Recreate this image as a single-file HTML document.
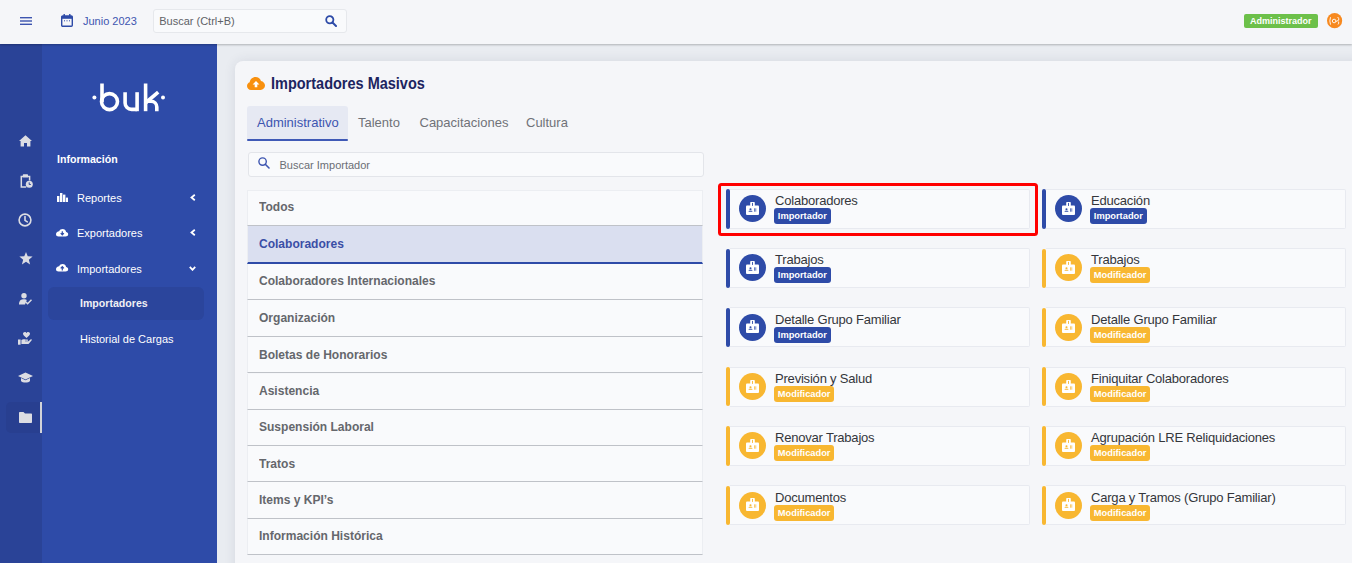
<!DOCTYPE html>
<html><head><meta charset="utf-8">
<style>
*{margin:0;padding:0;box-sizing:border-box}
html,body{width:1352px;height:563px;overflow:hidden;background:#e9ecf1;font-family:"Liberation Sans",sans-serif}
.a{position:absolute}
#hdr{left:0;top:0;width:1352px;height:44px;background:#f5f6f9;box-shadow:0 1px 2px rgba(0,0,0,.25);z-index:5}
#rail{left:0;top:44px;width:42px;height:519px;background:#2a4397}
#side{left:42px;top:44px;width:175px;height:519px;background:#2e4ba8}
#mainshade{left:217px;top:44px;width:1135px;height:519px;background:#e9ecf1}
#card{left:235px;top:61px;width:1130px;height:520px;background:#f5f6f9;border-radius:8px;box-shadow:0 0 12px rgba(40,50,80,.10)}
.txt{white-space:nowrap;line-height:1}
.navt{color:#fff;font-size:11px}
.li{position:absolute;left:247px;width:456px;background:#f9fafc;border-bottom:1px solid #bfc2c8;border-left:1px solid #eceef2;border-right:1px solid #eceef2}
.li span{margin-left:-0.5px}
.li span{position:absolute;left:11.4px;font-weight:700;font-size:13.2px;color:#65676c;white-space:nowrap;line-height:1;transform:scaleX(0.912);transform-origin:0 0}
.it{position:absolute;width:300px;height:40px;background:#f9fafc;border:1px solid #e8eaf0;border-left:none;border-radius:0 2px 2px 0}
.it .bar{position:absolute;left:-4px;top:-0.6px;width:4px;height:39.4px;border-radius:2px}
.it .circ{position:absolute;left:8.5px;top:5.3px;width:27px;height:27px;border-radius:50%}
.it .tt{position:absolute;left:45px;top:4.4px;font-size:13px;letter-spacing:-0.2px;color:#34363b;white-space:nowrap;line-height:1}
.it .bd{position:absolute;left:44px;top:18.4px;height:16px;border-radius:3px;color:#fff;font-weight:700;font-size:9.3px;line-height:16px;padding:0 3.8px;white-space:nowrap}
.blue .bar,.blue .circ,.blue .bd{background:#2e4ba8}
.yel .bar,.yel .circ,.yel .bd{background:#f8b731}
</style></head><body>
<div id="hdr" class="a">
  <!-- hamburger -->
  <svg class="a" style="left:20px;top:16px" width="12" height="10" viewBox="0 0 12 10"><rect x="0" y="1" width="12" height="1.4" fill="#3d55b0"/><rect x="0" y="4.3" width="12" height="1.4" fill="#3d55b0"/><rect x="0" y="7.6" width="12" height="1.4" fill="#3d55b0"/></svg>
  <!-- calendar -->
  <svg class="a" style="left:61px;top:14px" width="12" height="13" viewBox="0 0 12 13"><rect x="0.7" y="2" width="10.6" height="10.3" rx="1" fill="none" stroke="#2e4ba8" stroke-width="1.4"/><rect x="0.7" y="2" width="10.6" height="2.8" fill="#2e4ba8"/><rect x="2.5" y="0" width="1.4" height="3" fill="#2e4ba8"/><rect x="8.1" y="0" width="1.4" height="3" fill="#2e4ba8"/><rect x="3" y="6.3" width="1" height="1" fill="#2e4ba8"/><rect x="5.5" y="6.3" width="1" height="1" fill="#2e4ba8"/><rect x="8" y="6.3" width="1" height="1" fill="#2e4ba8"/></svg>
  <div class="a txt" style="left:83px;top:15.5px;font-size:11px;color:#3d55b0">Junio 2023</div>
  <div class="a" style="left:152.5px;top:8.8px;width:194px;height:24.6px;background:#f9fafc;border:1px solid #e6e8ec;border-radius:3px"></div>
  <div class="a txt" style="left:159.2px;top:15.9px;font-size:11px;color:#606267">Buscar (Ctrl+B)</div>
  <svg class="a" style="left:325px;top:15px" width="12" height="12" viewBox="0 0 12 12"><circle cx="4.8" cy="4.8" r="3.6" fill="none" stroke="#2e4ba8" stroke-width="1.8"/><line x1="7.5" y1="7.5" x2="11" y2="11" stroke="#2e4ba8" stroke-width="2" stroke-linecap="round"/></svg>
  <div class="a" style="left:1244px;top:14px;width:74px;height:14px;background:#6cc04a;border-radius:2px"></div>
  <div class="a txt" style="left:1250px;top:17px;font-size:9px;font-weight:700;color:#fff">Administrador</div>
  <svg class="a" style="left:1327px;top:13px" width="16" height="16" viewBox="0 0 16 16"><circle cx="7.6" cy="7.7" r="7.6" fill="#f7891f"/><circle cx="7.1" cy="8" r="1.8" fill="none" stroke="#fff" stroke-width="0.9"/><path d="M3.5 4.2 Q2.2 7.9 3.5 11.6" fill="none" stroke="#fff" stroke-width="0.9"/><path d="M10.7 4 Q12.3 5.8 11.7 7.2 L8.8 8.6 M11.5 8.6 Q12.3 10.2 11 11.5" fill="none" stroke="#fff" stroke-width="0.9"/></svg>
</div>

<div id="rail" class="a">
  <!-- home -->
  <svg class="a" style="left:19px;top:91px" width="13" height="12" viewBox="0 0 13 12"><path d="M6.5 0.3 L0 6 L1.6 6 L1.6 11.5 L5 11.5 L5 8 L8 8 L8 11.5 L11.4 11.5 L11.4 6 L13 6 Z" fill="#dcdde3"/></svg>
  <!-- clipboard clock -->
  <svg class="a" style="left:19.5px;top:130px" width="13" height="14" viewBox="0 0 13 14"><path d="M3 2.4 H1.3 V13 H6.2" fill="none" stroke="#dcdde3" stroke-width="1.5"/><path d="M7.6 2.4 H9.6 V6.6" fill="none" stroke="#dcdde3" stroke-width="1.5"/><rect x="2.8" y="0.3" width="5.2" height="3.3" rx="0.7" fill="#dcdde3"/><circle cx="9.3" cy="10.3" r="3.5" fill="#dcdde3"/><path d="M9.2 8.4 V10.5 H10.8" fill="none" stroke="#2a4397" stroke-width="1"/></svg>
  <!-- clock -->
  <svg class="a" style="left:18px;top:169px" width="14" height="14" viewBox="0 0 14 14"><circle cx="7" cy="7" r="5.9" fill="none" stroke="#dcdde3" stroke-width="1.6"/><path d="M7 3.6 V7.3 L9.3 8.8" fill="none" stroke="#dcdde3" stroke-width="1.6" stroke-linecap="round"/></svg>
  <!-- star -->
  <svg class="a" style="left:18.7px;top:208.3px;" width="14" height="13" viewBox="0 0 14 13"><path d="M7 0 L8.75 4.35 L13.6 4.6 L9.85 7.65 L11.1 12.6 L7 9.85 L2.9 12.6 L4.15 7.65 L0.4 4.6 L5.25 4.35 Z" fill="#dcdde3"/></svg>
  <!-- user check -->
  <svg class="a" style="left:19px;top:249px" width="13" height="12" viewBox="0 0 13 12"><circle cx="5" cy="2.8" r="2.7" fill="#dcdde3"/><path d="M0 11.5 C0 7.5 2 6.3 5 6.3 C6.5 6.3 7.2 6.6 7.8 7 L6 11.5 Z" fill="#dcdde3"/><path d="M6.8 9 L8.6 10.8 L12.5 6.8" fill="none" stroke="#dcdde3" stroke-width="1.4"/></svg>
  <!-- hand heart -->
  <svg class="a" style="left:18px;top:288px" width="14" height="13" viewBox="0 0 14 13"><path d="M8.5 6 C6 3.8 5 3 5 1.8 C5 0.7 5.9 0 6.8 0 C7.6 0 8.2 0.5 8.5 1 C8.8 0.5 9.4 0 10.2 0 C11.1 0 12 0.7 12 1.8 C12 3 11 3.8 8.5 6 Z" fill="#dcdde3"/><rect x="0" y="7.5" width="2.6" height="5.2" fill="#dcdde3"/><path d="M3.4 8 C4.5 7 6 7 7.5 7.5 L9.5 7.5 C10.2 7.5 10.2 8.8 9.5 8.8 L7 8.8 L7 9.2 L10.5 9.2 L12.8 7.3 C13.5 6.8 14.2 7.6 13.7 8.2 L11 11.5 C10.7 11.9 10.2 12 9.8 12 L3.4 12 Z" fill="#dcdde3"/></svg>
  <!-- grad cap -->
  <svg class="a" style="left:18px;top:328px" width="15" height="12" viewBox="0 0 15 12"><path d="M7.5 0.5 L15 4 L7.5 7.5 L0 4 Z" fill="#dcdde3"/><path d="M3 6 L3 9 C4.5 11 10.5 11 12 9 L12 6 L7.5 8.2 Z" fill="#dcdde3"/></svg>
  <!-- active folder -->
  <div class="a" style="left:6.2px;top:358.2px;width:33.6px;height:30.5px;background:#283f90;border-radius:5px 0 0 5px"></div>
  <div class="a" style="left:39.8px;top:358.2px;width:2px;height:30.8px;background:#d2d3d8"></div>
  <svg class="a" style="left:19px;top:368px" width="13" height="11" viewBox="0 0 13 11"><path d="M0 1 C0 0.4 0.4 0 1 0 L4.5 0 L6 1.6 L12 1.6 C12.6 1.6 13 2 13 2.6 L13 10 C13 10.6 12.6 11 12 11 L1 11 C0.4 11 0 10.6 0 10 Z" fill="#dcdde3"/></svg>
</div>
<div id="side" class="a">
  <svg class="a" style="left:46px;top:34px" width="82" height="38" viewBox="0 0 82 38">
    <g fill="none" stroke="#fff" stroke-width="3.6">
      <path d="M14 5.5 V24"/><circle cx="21.5" cy="23.6" r="8"/>
      <path d="M37.1 14.2 V25 A6.4 6.4 0 0 0 43.5 31.4 H49.1"/><path d="M49.1 14.2 V33.2"/>
      <path d="M57.6 5.5 V33.2"/><path d="M58 24.5 L70.2 14.2"/><path d="M58 23.2 H63 A5.8 5.8 0 0 1 68.8 29 V33.2"/>
    </g>
    <circle cx="6.4" cy="19.6" r="2" fill="#fff"/><circle cx="75" cy="19.6" r="2" fill="#fff"/>
  </svg>
  <div class="a txt" style="left:15px;top:110px;font-size:10.6px;font-weight:700;color:#fff">Información</div>
  <!-- reportes -->
  <svg class="a" style="left:15px;top:149.4px" width="11" height="9" viewBox="0 0 11 9"><rect x="0" y="3" width="2.4" height="6" fill="#fff"/><rect x="3" y="0" width="2.4" height="9" fill="#fff"/><rect x="6" y="1.6" width="2.4" height="7.4" fill="#fff"/><rect x="8.9" y="4.6" width="2.1" height="4.4" fill="#fff"/></svg>
  <div class="a txt navt" style="left:35px;top:149px">Reportes</div>
  <svg class="a" style="left:148px;top:150px" width="6" height="7" viewBox="0 0 6 7"><path d="M4.8 0.8 L1.5 3.5 L4.8 6.2" fill="none" stroke="#fff" stroke-width="1.8"/></svg>
  <!-- exportadores -->
  <svg class="a" style="left:14.4px;top:185.2px" width="13" height="8" viewBox="0 0 13 8"><path d="M2.5 7.5 H9.6 C10.9 7.5 12.2 6.5 12.2 5.2 C12.2 4 11.2 3.1 10.1 3 C9.9 1.3 8.4 0 6.6 0 C5 0 3.7 0.9 3.2 2.3 C1.4 2.4 0 3.7 0 5.2 C0 6.5 1.1 7.5 2.5 7.5 Z" fill="#fff"/><path d="M6.3 2.2 V5.6 M4.7 4.1 L6.3 5.8 L7.9 4.1" fill="none" stroke="#2e4ba8" stroke-width="1.2"/></svg>
  <div class="a txt navt" style="left:35px;top:184px">Exportadores</div>
  <svg class="a" style="left:148px;top:185px" width="6" height="7" viewBox="0 0 6 7"><path d="M4.8 0.8 L1.5 3.5 L4.8 6.2" fill="none" stroke="#fff" stroke-width="1.8"/></svg>
  <!-- importadores -->
  <svg class="a" style="left:14.4px;top:220.3px" width="13" height="8" viewBox="0 0 13 8"><path d="M2.5 7.5 H9.6 C10.9 7.5 12.2 6.5 12.2 5.2 C12.2 4 11.2 3.1 10.1 3 C9.9 1.3 8.4 0 6.6 0 C5 0 3.7 0.9 3.2 2.3 C1.4 2.4 0 3.7 0 5.2 C0 6.5 1.1 7.5 2.5 7.5 Z" fill="#fff"/><path d="M6.3 6.4 V2.8 M4.7 4.3 L6.3 2.6 L7.9 4.3" fill="none" stroke="#2e4ba8" stroke-width="1.2"/></svg>
  <div class="a txt navt" style="left:35px;top:220px">Importadores</div>
  <svg class="a" style="left:147px;top:222px" width="7" height="5" viewBox="0 0 7 5"><path d="M0.8 0.8 L3.5 3.8 L6.2 0.8" fill="none" stroke="#fff" stroke-width="1.8"/></svg>
  <div class="a" style="left:6px;top:243px;width:156px;height:33px;background:#2b459c;border-radius:6px"></div>
  <div class="a txt" style="left:38px;top:254px;font-size:10.6px;font-weight:700;color:#f0f0f4">Importadores</div>
  <div class="a txt navt" style="left:38px;top:290px">Historial de Cargas</div>
</div>
<div id="mainshade" class="a"></div>
<div id="card" class="a"></div>

<svg class="a" style="left:247px;top:77px" width="18" height="13" viewBox="0 0 18 13"><path d="M4 13 C1.8 13 0 11.2 0 9 C0 7.2 1.1 5.8 2.7 5.2 C3 2.3 5.5 0 8.6 0 C11.1 0 13.2 1.6 14 3.9 C16.3 4.3 18 6.3 18 8.6 C18 11 16 13 13.6 13 Z" fill="#f8900e"/><path d="M9 4 L5.6 7.4 H7.7 V10.2 H10.3 V7.4 H12.4 Z" fill="#fff"/></svg>
<div class="a txt" style="left:271.4px;top:75.5px;font-size:16.9px;font-weight:700;color:#1c2460;transform:scaleX(0.858);transform-origin:0 0">Importadores Masivos</div>
<div class="a" style="left:247px;top:106px;width:101px;height:35px;background:#e6e9f3;border-radius:3px 3px 0 0"></div><div class="a" style="left:247px;top:139px;width:101px;height:2px;background:#3f59b6;border-radius:1px"></div>
<div class="a txt" style="left:257px;top:116.3px;font-size:13px;color:#3d55b0">Administrativo</div>
<div class="a txt" style="left:358px;top:116.3px;font-size:13px;color:#707278">Talento</div>
<div class="a txt" style="left:419.5px;top:116.3px;font-size:13px;color:#707278">Capacitaciones</div>
<div class="a txt" style="left:526px;top:116.3px;font-size:13px;color:#707278">Cultura</div>
<div class="a" style="left:247.5px;top:151.5px;width:456px;height:25px;background:#f9fafc;border:1px solid #e3e5ea;border-radius:3px"></div>
<svg class="a" style="left:258px;top:157px" width="12" height="12" viewBox="0 0 12 12"><circle cx="4.6" cy="4.6" r="3.7" fill="none" stroke="#3d55b0" stroke-width="1.4"/><line x1="7.3" y1="7.3" x2="11" y2="11" stroke="#3d55b0" stroke-width="1.6" stroke-linecap="round"/></svg>
<div class="a txt" style="left:279.5px;top:159.5px;font-size:11px;color:#6b6e75">Buscar Importador</div>
<div class="li" style="border-top:1px solid #eceef2;top:189.6px;height:36.4px"><span style="top:9.7px">Todos</span></div>
<div class="li" style="top:226.0px;height:37.5px;background:#dadff0;border-bottom:2px solid #2e4ba8"><span style="top:10.7px;color:#3a4ea6">Colaboradores</span></div>
<div class="li" style="top:263.5px;height:36.8px"><span style="top:10.7px">Colaboradores Internacionales</span></div>
<div class="li" style="top:300.3px;height:36.6px"><span style="top:10.7px">Organización</span></div>
<div class="li" style="top:336.9px;height:36.6px"><span style="top:10.7px">Boletas de Honorarios</span></div>
<div class="li" style="top:373.5px;height:36.0px"><span style="top:10.7px">Asistencia</span></div>
<div class="li" style="top:409.5px;height:36.6px"><span style="top:10.7px">Suspensión Laboral</span></div>
<div class="li" style="top:446.1px;height:36.1px"><span style="top:10.7px">Tratos</span></div>
<div class="li" style="top:482.2px;height:36.6px"><span style="top:10.7px">Items y KPI’s</span></div>
<div class="li" style="top:518.8px;height:36.6px"><span style="top:10.7px">Información Histórica</span></div>
<div class="it blue" style="left:730px;top:188.8px"><div class="bar"></div><div class="circ"><svg class="a" style="left:7.3px;top:6.6px" width="13" height="13" viewBox="0 0 13 13"><rect x="0" y="3.5" width="13" height="9.5" rx="1" fill="#fff"/><rect x="4.2" y="0" width="4.6" height="4.5" rx="0.8" fill="#fff"/><rect x="6.05" y="0.9" width="0.9" height="3" fill="#2e4ba8"/><circle cx="4.5" cy="7.2" r="1.05" fill="#2e4ba8"/><rect x="2.6" y="8.8" width="3.8" height="1" rx="0.4" fill="#2e4ba8"/><rect x="8.2" y="6.3" width="0.7" height="3.4" fill="#2e4ba8"/><rect x="9.5" y="6.3" width="0.7" height="3.4" fill="#2e4ba8"/></svg></div><div class="tt">Colaboradores</div><div class="bd">Importador</div></div>
<div class="it blue" style="left:1046px;top:188.8px"><div class="bar"></div><div class="circ"><svg class="a" style="left:7.3px;top:6.6px" width="13" height="13" viewBox="0 0 13 13"><rect x="0" y="3.5" width="13" height="9.5" rx="1" fill="#fff"/><rect x="4.2" y="0" width="4.6" height="4.5" rx="0.8" fill="#fff"/><rect x="6.05" y="0.9" width="0.9" height="3" fill="#2e4ba8"/><circle cx="4.5" cy="7.2" r="1.05" fill="#2e4ba8"/><rect x="2.6" y="8.8" width="3.8" height="1" rx="0.4" fill="#2e4ba8"/><rect x="8.2" y="6.3" width="0.7" height="3.4" fill="#2e4ba8"/><rect x="9.5" y="6.3" width="0.7" height="3.4" fill="#2e4ba8"/></svg></div><div class="tt">Educación</div><div class="bd">Importador</div></div>
<div class="it blue" style="left:730px;top:248.1px"><div class="bar"></div><div class="circ"><svg class="a" style="left:7.3px;top:6.6px" width="13" height="13" viewBox="0 0 13 13"><rect x="0" y="3.5" width="13" height="9.5" rx="1" fill="#fff"/><rect x="4.2" y="0" width="4.6" height="4.5" rx="0.8" fill="#fff"/><rect x="6.05" y="0.9" width="0.9" height="3" fill="#2e4ba8"/><circle cx="4.5" cy="7.2" r="1.05" fill="#2e4ba8"/><rect x="2.6" y="8.8" width="3.8" height="1" rx="0.4" fill="#2e4ba8"/><rect x="8.2" y="6.3" width="0.7" height="3.4" fill="#2e4ba8"/><rect x="9.5" y="6.3" width="0.7" height="3.4" fill="#2e4ba8"/></svg></div><div class="tt">Trabajos</div><div class="bd">Importador</div></div>
<div class="it yel" style="left:1046px;top:248.1px"><div class="bar"></div><div class="circ"><svg class="a" style="left:7.3px;top:6.6px" width="13" height="13" viewBox="0 0 13 13"><rect x="0" y="3.5" width="13" height="9.5" rx="1" fill="#fff"/><rect x="4.2" y="0" width="4.6" height="4.5" rx="0.8" fill="#fff"/><rect x="6.05" y="0.9" width="0.9" height="3" fill="#f8b731"/><circle cx="4.5" cy="7.2" r="1.05" fill="#f8b731"/><rect x="2.6" y="8.8" width="3.8" height="1" rx="0.4" fill="#f8b731"/><rect x="8.2" y="6.3" width="0.7" height="3.4" fill="#f8b731"/><rect x="9.5" y="6.3" width="0.7" height="3.4" fill="#f8b731"/></svg></div><div class="tt">Trabajos</div><div class="bd">Modificador</div></div>
<div class="it blue" style="left:730px;top:307.4px"><div class="bar"></div><div class="circ"><svg class="a" style="left:7.3px;top:6.6px" width="13" height="13" viewBox="0 0 13 13"><rect x="0" y="3.5" width="13" height="9.5" rx="1" fill="#fff"/><rect x="4.2" y="0" width="4.6" height="4.5" rx="0.8" fill="#fff"/><rect x="6.05" y="0.9" width="0.9" height="3" fill="#2e4ba8"/><circle cx="4.5" cy="7.2" r="1.05" fill="#2e4ba8"/><rect x="2.6" y="8.8" width="3.8" height="1" rx="0.4" fill="#2e4ba8"/><rect x="8.2" y="6.3" width="0.7" height="3.4" fill="#2e4ba8"/><rect x="9.5" y="6.3" width="0.7" height="3.4" fill="#2e4ba8"/></svg></div><div class="tt">Detalle Grupo Familiar</div><div class="bd">Importador</div></div>
<div class="it yel" style="left:1046px;top:307.4px"><div class="bar"></div><div class="circ"><svg class="a" style="left:7.3px;top:6.6px" width="13" height="13" viewBox="0 0 13 13"><rect x="0" y="3.5" width="13" height="9.5" rx="1" fill="#fff"/><rect x="4.2" y="0" width="4.6" height="4.5" rx="0.8" fill="#fff"/><rect x="6.05" y="0.9" width="0.9" height="3" fill="#f8b731"/><circle cx="4.5" cy="7.2" r="1.05" fill="#f8b731"/><rect x="2.6" y="8.8" width="3.8" height="1" rx="0.4" fill="#f8b731"/><rect x="8.2" y="6.3" width="0.7" height="3.4" fill="#f8b731"/><rect x="9.5" y="6.3" width="0.7" height="3.4" fill="#f8b731"/></svg></div><div class="tt">Detalle Grupo Familiar</div><div class="bd">Modificador</div></div>
<div class="it yel" style="left:730px;top:366.7px"><div class="bar"></div><div class="circ"><svg class="a" style="left:7.3px;top:6.6px" width="13" height="13" viewBox="0 0 13 13"><rect x="0" y="3.5" width="13" height="9.5" rx="1" fill="#fff"/><rect x="4.2" y="0" width="4.6" height="4.5" rx="0.8" fill="#fff"/><rect x="6.05" y="0.9" width="0.9" height="3" fill="#f8b731"/><circle cx="4.5" cy="7.2" r="1.05" fill="#f8b731"/><rect x="2.6" y="8.8" width="3.8" height="1" rx="0.4" fill="#f8b731"/><rect x="8.2" y="6.3" width="0.7" height="3.4" fill="#f8b731"/><rect x="9.5" y="6.3" width="0.7" height="3.4" fill="#f8b731"/></svg></div><div class="tt">Previsión y Salud</div><div class="bd">Modificador</div></div>
<div class="it yel" style="left:1046px;top:366.7px"><div class="bar"></div><div class="circ"><svg class="a" style="left:7.3px;top:6.6px" width="13" height="13" viewBox="0 0 13 13"><rect x="0" y="3.5" width="13" height="9.5" rx="1" fill="#fff"/><rect x="4.2" y="0" width="4.6" height="4.5" rx="0.8" fill="#fff"/><rect x="6.05" y="0.9" width="0.9" height="3" fill="#f8b731"/><circle cx="4.5" cy="7.2" r="1.05" fill="#f8b731"/><rect x="2.6" y="8.8" width="3.8" height="1" rx="0.4" fill="#f8b731"/><rect x="8.2" y="6.3" width="0.7" height="3.4" fill="#f8b731"/><rect x="9.5" y="6.3" width="0.7" height="3.4" fill="#f8b731"/></svg></div><div class="tt">Finiquitar Colaboradores</div><div class="bd">Modificador</div></div>
<div class="it yel" style="left:730px;top:426.0px"><div class="bar"></div><div class="circ"><svg class="a" style="left:7.3px;top:6.6px" width="13" height="13" viewBox="0 0 13 13"><rect x="0" y="3.5" width="13" height="9.5" rx="1" fill="#fff"/><rect x="4.2" y="0" width="4.6" height="4.5" rx="0.8" fill="#fff"/><rect x="6.05" y="0.9" width="0.9" height="3" fill="#f8b731"/><circle cx="4.5" cy="7.2" r="1.05" fill="#f8b731"/><rect x="2.6" y="8.8" width="3.8" height="1" rx="0.4" fill="#f8b731"/><rect x="8.2" y="6.3" width="0.7" height="3.4" fill="#f8b731"/><rect x="9.5" y="6.3" width="0.7" height="3.4" fill="#f8b731"/></svg></div><div class="tt">Renovar Trabajos</div><div class="bd">Modificador</div></div>
<div class="it yel" style="left:1046px;top:426.0px"><div class="bar"></div><div class="circ"><svg class="a" style="left:7.3px;top:6.6px" width="13" height="13" viewBox="0 0 13 13"><rect x="0" y="3.5" width="13" height="9.5" rx="1" fill="#fff"/><rect x="4.2" y="0" width="4.6" height="4.5" rx="0.8" fill="#fff"/><rect x="6.05" y="0.9" width="0.9" height="3" fill="#f8b731"/><circle cx="4.5" cy="7.2" r="1.05" fill="#f8b731"/><rect x="2.6" y="8.8" width="3.8" height="1" rx="0.4" fill="#f8b731"/><rect x="8.2" y="6.3" width="0.7" height="3.4" fill="#f8b731"/><rect x="9.5" y="6.3" width="0.7" height="3.4" fill="#f8b731"/></svg></div><div class="tt">Agrupación LRE Reliquidaciones</div><div class="bd">Modificador</div></div>
<div class="it yel" style="left:730px;top:485.3px"><div class="bar"></div><div class="circ"><svg class="a" style="left:7.3px;top:6.6px" width="13" height="13" viewBox="0 0 13 13"><rect x="0" y="3.5" width="13" height="9.5" rx="1" fill="#fff"/><rect x="4.2" y="0" width="4.6" height="4.5" rx="0.8" fill="#fff"/><rect x="6.05" y="0.9" width="0.9" height="3" fill="#f8b731"/><circle cx="4.5" cy="7.2" r="1.05" fill="#f8b731"/><rect x="2.6" y="8.8" width="3.8" height="1" rx="0.4" fill="#f8b731"/><rect x="8.2" y="6.3" width="0.7" height="3.4" fill="#f8b731"/><rect x="9.5" y="6.3" width="0.7" height="3.4" fill="#f8b731"/></svg></div><div class="tt">Documentos</div><div class="bd">Modificador</div></div>
<div class="it yel" style="left:1046px;top:485.3px"><div class="bar"></div><div class="circ"><svg class="a" style="left:7.3px;top:6.6px" width="13" height="13" viewBox="0 0 13 13"><rect x="0" y="3.5" width="13" height="9.5" rx="1" fill="#fff"/><rect x="4.2" y="0" width="4.6" height="4.5" rx="0.8" fill="#fff"/><rect x="6.05" y="0.9" width="0.9" height="3" fill="#f8b731"/><circle cx="4.5" cy="7.2" r="1.05" fill="#f8b731"/><rect x="2.6" y="8.8" width="3.8" height="1" rx="0.4" fill="#f8b731"/><rect x="8.2" y="6.3" width="0.7" height="3.4" fill="#f8b731"/><rect x="9.5" y="6.3" width="0.7" height="3.4" fill="#f8b731"/></svg></div><div class="tt">Carga y Tramos (Grupo Familiar)</div><div class="bd">Modificador</div></div>
<div class="a" style="left:718px;top:183px;width:320px;height:52.5px;border:3.7px solid #ff0000;border-radius:3.5px"></div>
</body></html>
